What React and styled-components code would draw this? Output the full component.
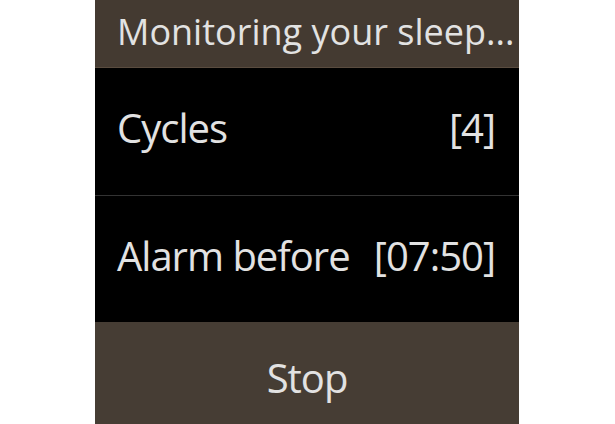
import React from 'react';
import styled, { createGlobalStyle } from 'styled-components';

const GlobalStyle = createGlobalStyle`
  html, body {
    margin: 0;
    padding: 0;
    background: #ffffff;
  }
  body {
    font-family: "Open Sans", "Noto Sans", sans-serif;
  }
`;

const Page = styled.div`
  width: 615px;
  height: 424px;
  display: flex;
  padding-left: 95px;
  box-sizing: border-box;
  overflow: hidden;
`;

const Screen = styled.div`
  width: 424px;
  height: 424px;
  display: flex;
  flex-direction: column;
  background: #000;
  color: #e2e2e2;
`;

const Header = styled.div`
  height: 68px;
  flex: none;
  box-sizing: border-box;
  background: #443a31;
  border-bottom: 1px solid #5a4c3f;
  display: flex;
  align-items: center;
  padding: 0 0 5px 22px;
  font-size: 36px;
  white-space: nowrap;
  overflow: hidden;
`;

const Row = styled.div`
  flex: none;
  box-sizing: border-box;
  height: ${({ h }) => h}px;
  display: flex;
  align-items: center;
  justify-content: space-between;
  padding: 0 24px 8px 22px;
  font-size: 40px;
  letter-spacing: -1px;
  border-bottom: ${({ divider }) => (divider ? '1px solid #333' : 'none')};
`;

const StopButton = styled.div`
  flex: 1;
  background: #463d34;
  display: flex;
  align-items: center;
  justify-content: center;
  padding-top: 8px;
  font-size: 40px;
  letter-spacing: -1px;
`;

export default function App() {
  return (
    <>
      <GlobalStyle />
      <Page>
        <Screen>
          <Header>Monitoring your sleep...</Header>
          <Row h={128} divider>
            <span>Cycles</span>
            <span>[4]</span>
          </Row>
          <Row h={126}>
            <span>Alarm before</span>
            <span>[07:50]</span>
          </Row>
          <StopButton>Stop</StopButton>
        </Screen>
      </Page>
    </>
  );
}
